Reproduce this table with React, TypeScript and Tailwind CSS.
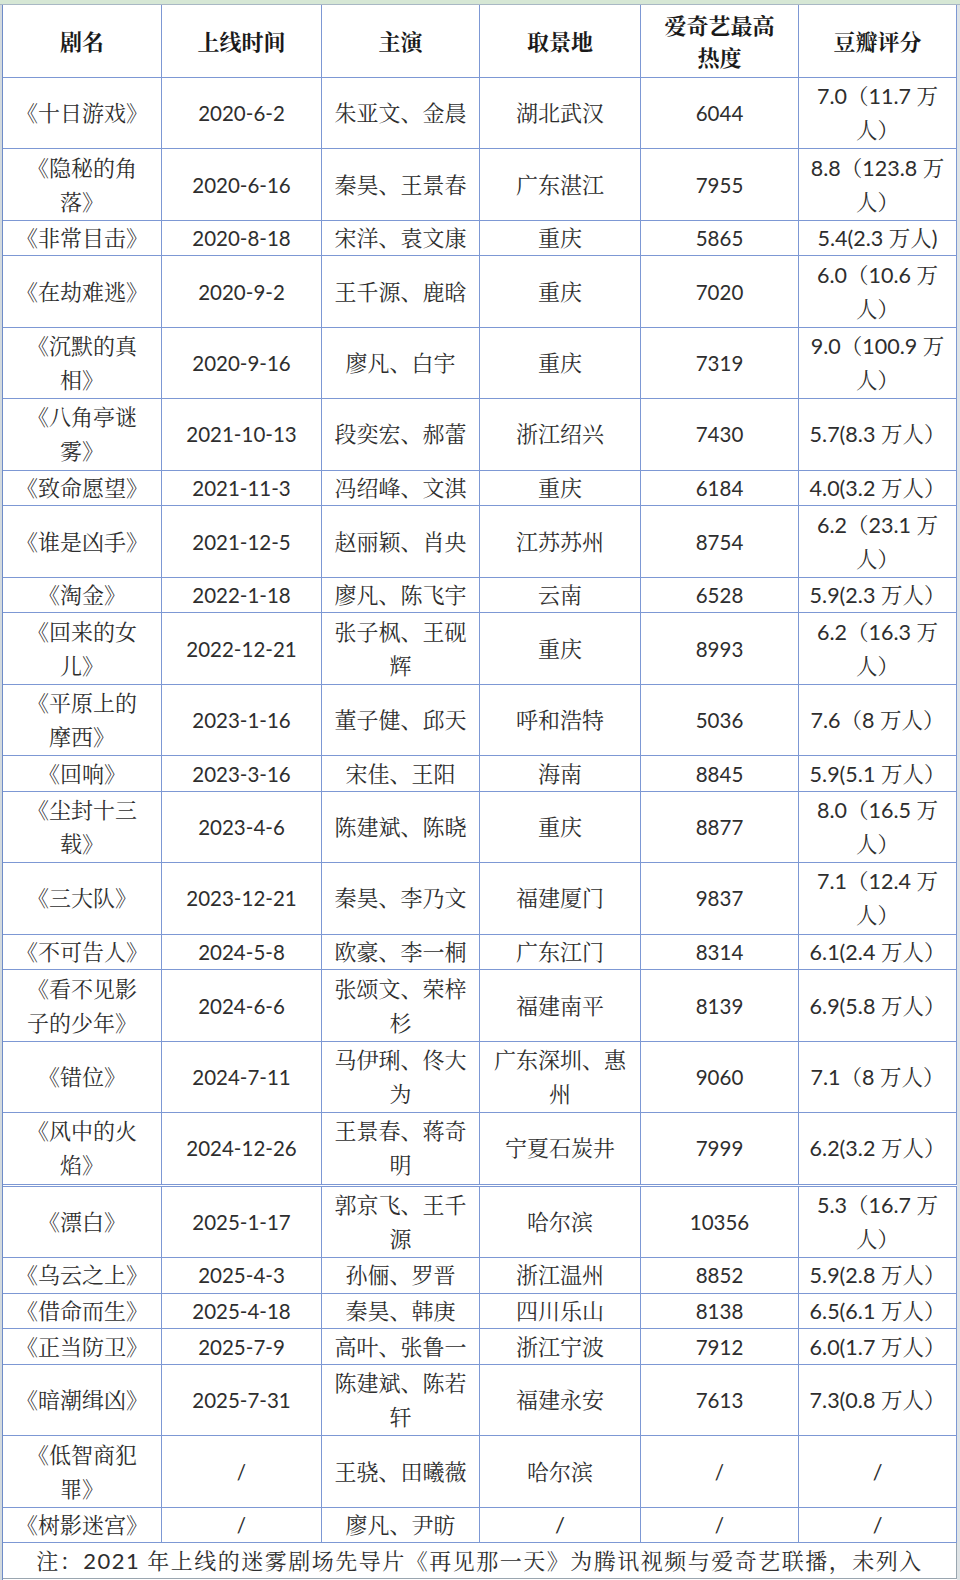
import React from "react";

type Row = {
  h: "D" | "S";
  c: string[][]; // each cell: list of lines
};

const r = (h: "D" | "S", ...cells: string[]): Row => ({
  h,
  c: cells.map((s) => s.split("/n")),
});

const rows: Row[] = [
  r("D", "《十日游戏》", "2020-6-2", "朱亚文、金晨", "湖北武汉", "6044", "7.0（11.7 万/n人）"),
  r("D", "《隐秘的角/n落》", "2020-6-16", "秦昊、王景春", "广东湛江", "7955", "8.8（123.8 万/n人）"),
  r("S", "《非常目击》", "2020-8-18", "宋洋、袁文康", "重庆", "5865", "5.4(2.3 万人)"),
  r("D", "《在劫难逃》", "2020-9-2", "王千源、鹿晗", "重庆", "7020", "6.0（10.6 万/n人）"),
  r("D", "《沉默的真/n相》", "2020-9-16", "廖凡、白宇", "重庆", "7319", "9.0（100.9 万/n人）"),
  r("D", "《八角亭谜/n雾》", "2021-10-13", "段奕宏、郝蕾", "浙江绍兴", "7430", "5.7(8.3 万人）"),
  r("S", "《致命愿望》", "2021-11-3", "冯绍峰、文淇", "重庆", "6184", "4.0(3.2 万人）"),
  r("D", "《谁是凶手》", "2021-12-5", "赵丽颖、肖央", "江苏苏州", "8754", "6.2（23.1 万/n人）"),
  r("S", "《淘金》", "2022-1-18", "廖凡、陈飞宇", "云南", "6528", "5.9(2.3 万人）"),
  r("D", "《回来的女/n儿》", "2022-12-21", "张子枫、王砚/n辉", "重庆", "8993", "6.2（16.3 万/n人）"),
  r("D", "《平原上的/n摩西》", "2023-1-16", "董子健、邱天", "呼和浩特", "5036", "7.6（8 万人）"),
  r("S", "《回响》", "2023-3-16", "宋佳、王阳", "海南", "8845", "5.9(5.1 万人）"),
  r("D", "《尘封十三/n载》", "2023-4-6", "陈建斌、陈晓", "重庆", "8877", "8.0（16.5 万/n人）"),
  r("D", "《三大队》", "2023-12-21", "秦昊、李乃文", "福建厦门", "9837", "7.1（12.4 万/n人）"),
  r("S", "《不可告人》", "2024-5-8", "欧豪、李一桐", "广东江门", "8314", "6.1(2.4 万人）"),
  r("D", "《看不见影/n子的少年》", "2024-6-6", "张颂文、荣梓/n杉", "福建南平", "8139", "6.9(5.8 万人）"),
  r("D", "《错位》", "2024-7-11", "马伊琍、佟大/n为", "广东深圳、惠/n州", "9060", "7.1（8 万人）"),
  r("D", "《风中的火/n焰》", "2024-12-26", "王景春、蒋奇/n明", "宁夏石炭井", "7999", "6.2(3.2 万人）"),
  r("D", "《漂白》", "2025-1-17", "郭京飞、王千/n源", "哈尔滨", "10356", "5.3（16.7 万/n人）"),
  r("S", "《乌云之上》", "2025-4-3", "孙俪、罗晋", "浙江温州", "8852", "5.9(2.8 万人）"),
  r("S", "《借命而生》", "2025-4-18", "秦昊、韩庚", "四川乐山", "8138", "6.5(6.1 万人）"),
  r("S", "《正当防卫》", "2025-7-9", "高叶、张鲁一", "浙江宁波", "7912", "6.0(1.7 万人）"),
  r("D", "《暗潮缉凶》", "2025-7-31", "陈建斌、陈若/n轩", "福建永安", "7613", "7.3(0.8 万人）"),
  r("D", "《低智商犯/n罪》", "/", "王骁、田曦薇", "哈尔滨", "/", "/"),
  r("S", "《树影迷宫》", "/", "廖凡、尹昉", "/", "/", "/"),
];

const GRID = "grid grid-cols-[159px_160px_158px_161px_158px_158px]";
const FONT = "font-[Lato,'Noto_Serif_CJK_SC','Noto_Sans_CJK_SC',sans-serif]";

const sizeFor = (i: number) =>
  i === 1 || i === 4 ? "text-[20.5px]" : i === 5 ? "text-[21.5px]" : "text-[22px]";

function Cell({ lines, i }: { lines: string[]; i: number }) {
  return (
    <div
      className={`flex flex-col items-center justify-center border-r border-[#7d98d4] text-center whitespace-nowrap text-[#2e2e2e] ${sizeFor(i)}`}
    >
      {lines.map((l, k) => (
        <div key={k} className="leading-[34px]">
          {l}
        </div>
      ))}
    </div>
  );
}

export default function App() {
  const headers = [["剧名"], ["上线时间"], ["主演"], ["取景地"], ["爱奇艺最高", "热度"], ["豆瓣评分"]];
  return (
    <div className={`w-[960px] h-[1580px] overflow-hidden bg-white flex flex-col ${FONT}`}>
      <div className="h-[5px] shrink-0 bg-[#d6e7d5] border-b border-[#a9b8c4]" />
      <div className="flex flex-1">
        <div className="w-[2px] shrink-0 bg-[#d3dade]" />
        <div className="w-[955px] shrink-0 border-l border-[#6f8cc8] flex flex-col">
          <div className={`${GRID} h-[73px] shrink-0 border-b border-[#7d98d4]`}>
            {headers.map((h, i) => (
              <div
                key={i}
                className="flex flex-col items-center justify-center border-r border-[#7d98d4] text-[22px] font-bold text-[#1a1a1a] font-['Noto_Serif_CJK_SC','Noto_Sans_CJK_SC',sans-serif]"
              >
                {h.map((l, k) => (
                  <div key={k} className="leading-[32px]">
                    {l}
                  </div>
                ))}
              </div>
            ))}
          </div>
          {rows.map((row, ri) => (
            <React.Fragment key={ri}>
              <div
                className={`${GRID} shrink-0 border-b border-[#7d98d4] ${
                  row.h === "D" ? "h-[71.4px]" : "h-[35.7px]"
                }`}
              >
                {row.c.map((lines, i) => (
                  <Cell key={i} lines={lines} i={i} />
                ))}
              </div>
              {ri === 17 && <div className="h-[2px] shrink-0 border-b border-[#7d98d4]" />}
            </React.Fragment>
          ))}
          <div className="h-[36px] shrink-0 border-b border-[#9aa6b0] border-r border-[#7d98d4] flex items-center justify-center text-[22px] text-[#2e2e2e] whitespace-nowrap tracking-[1.5px]">
            注：2021 年上线的迷雾剧场先导片《再见那一天》为腾讯视频与爱奇艺联播，未列入
          </div>
        </div>
        <div className="w-[3px] shrink-0 bg-[#dfe4e6]" />
      </div>
    </div>
  );
}
